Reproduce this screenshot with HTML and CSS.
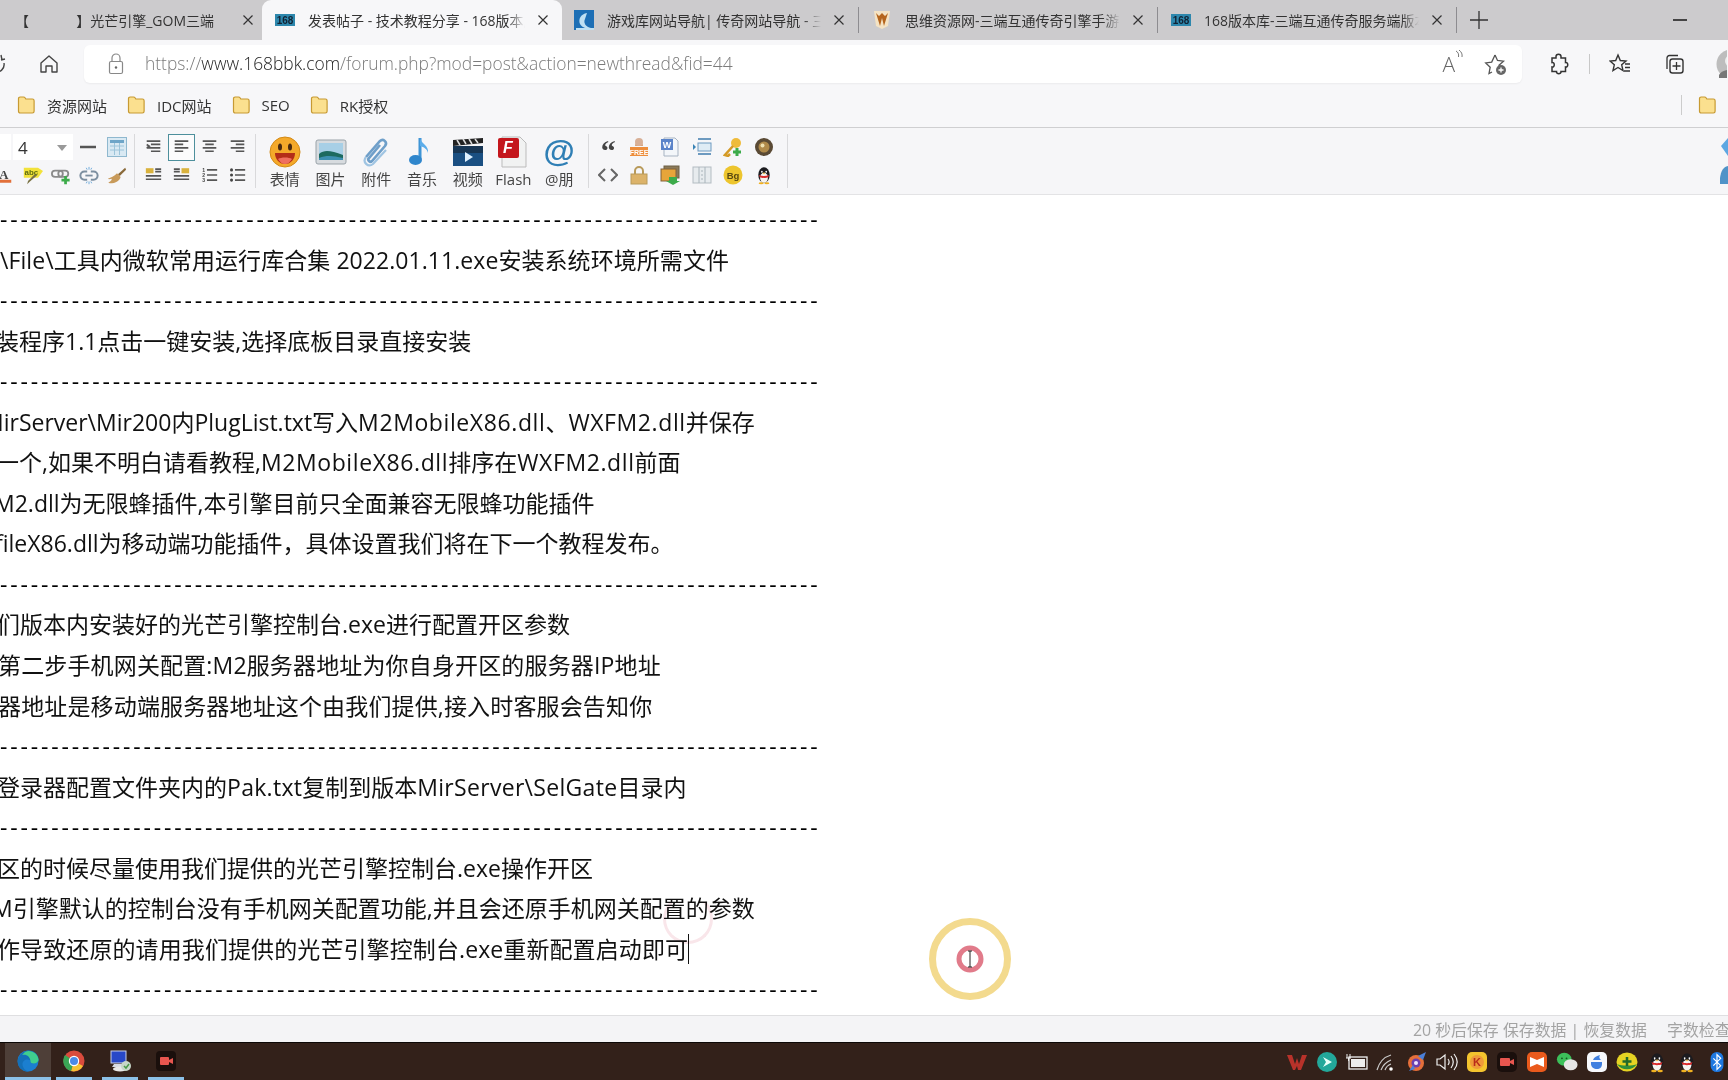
FILE: index.html
```html
<!DOCTYPE html>
<html lang="zh-CN">
<head>
<meta charset="utf-8">
<title>发表帖子 - 技术教程分享 - 168版本库</title>
<link rel="stylesheet" href="styles.css">
</head>
<body>
<svg class="defs" width="0" height="0" aria-hidden="true">
  <symbol id="folder" viewBox="0 0 20 20">
    <path d="M2.500 5V3.600C2.500 2.700 3.200 2 4.100 2h3.400c.8 0 1.300.4 1.700 1l.6 1h6.600c1 0 1.700.7 1.700 1.700v10.600c0 1-.7 1.700-1.700 1.700H4.200c-1 0-1.700-.7-1.700-1.700z" fill="#fbe08f" stroke="#c79a33" stroke-width="1.200"/>
  </symbol>
  <symbol id="logo168" viewBox="0 0 20 12">
    <rect width="20" height="12" fill="#2d87ad"/>
    <text x="10" y="9.500" font-size="10" font-weight="700" text-anchor="middle" fill="#123" font-family="Liberation Sans">168</text>
  </symbol>
  <symbol id="close" viewBox="0 0 12 12">
    <path d="M1.500 1.500l9 9M10.500 1.500l-9 9" stroke="#333" stroke-width="1.200" fill="none"/>
  </symbol>
  <symbol id="al-left" viewBox="0 0 20 18"><path d="M2 2h16M2 6h10M2 10h16M2 14h10" stroke="#555" stroke-width="2" fill="none"/></symbol>
  <symbol id="al-center" viewBox="0 0 20 18"><path d="M2 2h16M5 6h10M2 10h16M5 14h10" stroke="#555" stroke-width="2" fill="none"/></symbol>
  <symbol id="al-right" viewBox="0 0 20 18"><path d="M2 2h16M8 6h10M2 10h16M8 14h10" stroke="#555" stroke-width="2" fill="none"/></symbol>
  <symbol id="penguin" viewBox="0 0 24 28">
    <ellipse cx="12" cy="14" rx="8" ry="11" fill="#1b1b1f"/>
    <ellipse cx="12" cy="18" rx="5.500" ry="7" fill="#f5f3f0"/>
    <path d="M5 14c4 2 10 2 14 0l-1 3c-3 1.500-9 1.500-12 0z" fill="#d92b2b"/>
    <path d="M9 8a1 1.500 0 1 0 .1 0M15 8a1 1.500 0 1 0 .1 0" fill="#fff"/>
    <path d="M10 11h4l-2 2z" fill="#f0b020"/>
    <ellipse cx="8" cy="25.500" rx="3.500" ry="1.500" fill="#f0b020"/>
    <ellipse cx="16" cy="25.500" rx="3.500" ry="1.500" fill="#f0b020"/>
  </symbol>
</svg>

<div class="cursor-trail"></div>

<header class="tabstrip">
  <div class="tab first">
    <span class="tab-title first-title"><span>【</span><span>】光芒引擎_GOM三端</span></span>
    <svg class="tab-close"><use href="#close"/></svg>
  </div>
  <div class="tab active">
    <svg class="favicon logo"><use href="#logo168"/></svg>
    <span class="tab-title">发表帖子 - 技术教程分享 - 168版本库</span>
    <svg class="tab-close"><use href="#close"/></svg>
  </div>
  <div class="tab third">
    <svg class="favicon square" viewBox="0 0 20 20"><rect width="20" height="20" fill="#1d6fb5"/><path d="M13 3C7 4 4 9 6 14c1 2 3 3 5 4H2v2h18v-2h-3c-5-1-8-5-6-9 .5-2 1.500-4 2-6z" fill="#bfe0f2"/></svg>
    <span class="tab-title">游戏库网站导航| 传奇网站导航 - 三端互通</span>
    <svg class="tab-close"><use href="#close"/></svg>
  </div>
  <i class="tab-sep"></i>
  <div class="tab">
    <svg class="favicon square" viewBox="0 0 20 20"><path d="M2 1h16l-2 15-6 3-6-3z" fill="#f4e3c4"/><path d="M4 3l4 13 2-8 2 8 4-13-3 3-3-3-3 3z" fill="#b5651d"/></svg>
    <span class="tab-title">思维资源网-三端互通传奇引擎手游版本下载</span>
    <svg class="tab-close"><use href="#close"/></svg>
  </div>
  <i class="tab-sep"></i>
  <div class="tab">
    <svg class="favicon logo"><use href="#logo168"/></svg>
    <span class="tab-title">168版本库-三端互通传奇服务端版本下载</span>
    <svg class="tab-close"><use href="#close"/></svg>
  </div>
  <i class="tab-sep"></i>
  <svg class="new-tab" viewBox="0 0 18 18"><path d="M9 0v18M0 9h18" stroke="#333" stroke-width="1.300" fill="none"/></svg>
  <span class="tab-spacer"></span>
  <i class="minimize"></i>
</header>

<nav class="navbar">
  <svg class="nav-reload" viewBox="0 0 10 22"><path d="M1 2l1 5M1 7l4-1M-6 19c6 1 11-3 10-9" stroke="#444" stroke-width="1.400" fill="none"/></svg>
  <svg class="nav-home" viewBox="0 0 20 20"><path d="M2 9l8-7 8 7v9h-5v-6H7v6H2z" fill="none" stroke="#444" stroke-width="1.400" stroke-linejoin="round"/></svg>
  <div class="omnibox">
    <svg class="lock" viewBox="0 0 16 22"><path d="M4 9V5a4 4 0 0 1 8 0v4" fill="none" stroke="#888" stroke-width="1.200"/><rect x="1.500" y="8.500" width="13" height="12" rx="1.500" fill="none" stroke="#888" stroke-width="1.200"/><circle cx="8" cy="14.500" r="1.200" fill="#666"/></svg>
    <span class="url"><span class="url-dim">https://</span><span class="url-host">www.168bbk.com</span><span class="url-dim">/forum.php?mod=post&amp;action=newthread&amp;fid=44</span></span>
    <span class="omni-spacer"></span>
    <span class="read-aloud">A<svg viewBox="0 0 8 12"><path d="M1 1c2 1 3 3 2.500 6M4 0c2.500 2 3.500 4 3 7" fill="none" stroke="#777" stroke-width="1"/></svg></span>
    <svg class="omni-star" viewBox="0 0 24 24"><path d="M11 3l2.500 5.500 6 .7-4.500 4 1 3M8 20l-3 1.500 1.200-6.300-4.500-4.300 6-.8L11 3" fill="none" stroke="#555" stroke-width="1.300"/><circle cx="17" cy="18" r="5" fill="#666"/><path d="M17 15.500v5M14.500 18h5" stroke="#fff" stroke-width="1.300"/></svg>
  </div>
  <svg class="nav-ext" viewBox="0 0 22 22"><path d="M8 3.500c0-3 5-3 5 0V5h4.500v4.500c3-.5 3 5 0 4.500V18.500H13c.500 3-5 3-4.500 0H4V14c3 .5 3-5 0-4.500V5h4z" fill="none" stroke="#333" stroke-width="1.500"/></svg>
  <i class="nav-sep"></i>
  <svg class="nav-fav" viewBox="0 0 22 22"><path d="M9 2l2.300 5.500 5.700.5-4.300 3.800 1.300 5.700L9 14.500l-5 3 1.300-5.700L1 8l5.700-.5z" fill="none" stroke="#333" stroke-width="1.400"/><path d="M16 11h5M16 14.500h5M15 18h6" stroke="#333" stroke-width="1.300"/></svg>
  <svg class="nav-coll" viewBox="0 0 22 22"><path d="M4 16V5c0-1.500 1-2.500 2.500-2.500H15" fill="none" stroke="#333" stroke-width="1.300"/><rect x="7" y="6" width="13" height="14" rx="2.500" fill="none" stroke="#333" stroke-width="1.400"/><path d="M13.500 9v8M9.500 13h8" stroke="#333" stroke-width="1.300"/></svg>
  <svg class="nav-avatar" viewBox="0 0 11 30"><circle cx="15" cy="15" r="14.500" fill="#bdbdbd"/><circle cx="15" cy="12" r="6" fill="#eee"/><path d="M3 26c3-7 21-7 24 0v3H3z" fill="#777"/></svg>
</nav>

<nav class="bookmarks">
  <a class="bm"><svg class="bm-folder"><use href="#folder"/></svg>资源网站</a>
  <a class="bm"><svg class="bm-folder"><use href="#folder"/></svg>IDC网站</a>
  <a class="bm"><svg class="bm-folder"><use href="#folder"/></svg>SEO</a>
  <a class="bm"><svg class="bm-folder"><use href="#folder"/></svg>RK授权</a>
  <span class="bm-spacer"></span>
  <i class="bm-sep"></i>
  <svg class="bm-folder"><use href="#folder"/></svg>
</nav>

<section class="editor-bar">
  <div class="eb-group eb-font">
    <div class="eb-selects">
      <span class="eb-select stub"></span>
      <span class="eb-select size">4<i class="caret"></i></span>
      <svg class="ic20" viewBox="0 0 20 20"><path d="M2 10h16" stroke="#555" stroke-width="2.500"/></svg>
      <svg class="ic20 table-ic" viewBox="0 0 20 20"><rect x=".5" y=".5" width="19" height="19" fill="#d9e9f3" stroke="#8fb8cf"/><rect x="3" y="3" width="14" height="3" fill="#6ea5c8"/><path d="M3 9h14M3 13h14M7.500 6v12M12.500 6v12" stroke="#9cc4da" fill="none"/></svg>
    </div>
    <div class="eb-tools">
      <svg class="ic20 a-ic" viewBox="0 0 20 20"><text x="5" y="14" font-size="17" font-weight="700" fill="#444" text-anchor="middle" font-family="Liberation Serif">A</text><rect x="-6" y="15" width="21" height="4" fill="#e2703a"/></svg>
      <svg class="ic20 abc-ic" viewBox="0 0 24 20"><path d="M1 0h17l6 4-6 8H1z" fill="#f2e23b"/><text x="10" y="8.500" font-size="9.500" font-weight="700" fill="#5b6a10" text-anchor="middle" font-family="Liberation Sans">abc</text><path d="M17 9l-9 8-3 3 1-4 8-8z" fill="#7a7345"/></svg>
      <svg class="ic20" viewBox="0 0 22 20"><rect x="1" y="4" width="12" height="7" rx="3.500" fill="none" stroke="#8a8a8a" stroke-width="2"/><rect x="8" y="4" width="11" height="7" rx="3.500" fill="none" stroke="#8a8a8a" stroke-width="2"/><path d="M16 10v9M11.500 14.500h9" stroke="#3cab4a" stroke-width="3"/></svg>
      <svg class="ic20" viewBox="0 0 22 20"><path d="M9 5H6a4.500 4.500 0 0 0 0 9h3M13 5h3a4.500 4.500 0 0 1 0 9h-3" fill="none" stroke="#7d8fa0" stroke-width="2.200"/><path d="M7 9.500h8" stroke="#7d8fa0" stroke-width="2"/><path d="M11 0v3M11 16v3M14 1l-1 2M8 1l1 2M14 18l-1-2M8 18l1-2" stroke="#67a6d8" stroke-width="1"/></svg>
      <svg class="ic20" viewBox="0 0 22 20"><path d="M20 1L12 8l2 2 7-7z" fill="#8a6a3a"/><path d="M11 7l4 4c-1 4-5 7-12 7-1 0-2-.5-1-1 2-1 4-3 3-4-1 0-3 1-4 0 3-1 7-3 10-6z" fill="#c89a5a"/></svg>
    </div>
  </div>
  <i class="eb-sep"></i>
  <div class="eb-grid4">
    <svg class="ic-al" viewBox="0 0 20 18"><path d="M2 2h16M7 6h11M2 10h16M7 14h11M2 6l3 2-3 2" stroke="#555" stroke-width="2" fill="none"/></svg>
    <span class="al-active"><svg class="ic-al" viewBox="0 0 20 18"><use href="#al-left"/></svg></span>
    <svg class="ic-al" viewBox="0 0 20 18"><use href="#al-center"/></svg>
    <svg class="ic-al" viewBox="0 0 20 18"><use href="#al-right"/></svg>
    <svg class="ic-al" viewBox="0 0 20 18"><rect x="1" y="1" width="9" height="6" fill="#d9b23d"/><path d="M12 2h7M12 5h7M1 10h18M1 14h18" stroke="#555" stroke-width="2" fill="none"/></svg>
    <svg class="ic-al" viewBox="0 0 20 18"><rect x="10" y="1" width="9" height="6" fill="#d9b23d"/><path d="M1 2h7M1 5h7M1 10h18M1 14h18" stroke="#555" stroke-width="2" fill="none"/></svg>
    <svg class="ic-al" viewBox="0 0 20 18"><path d="M7 3h12M7 9h12M7 15h12" stroke="#555" stroke-width="2" fill="none"/><text x="3" y="5.500" font-size="6" font-weight="700" fill="#444" text-anchor="middle" font-family="Liberation Sans">1</text><text x="3" y="11.500" font-size="6" font-weight="700" fill="#444" text-anchor="middle" font-family="Liberation Sans">2</text><text x="3" y="17.500" font-size="6" font-weight="700" fill="#444" text-anchor="middle" font-family="Liberation Sans">3</text></svg>
    <svg class="ic-al" viewBox="0 0 20 18"><path d="M7 3h12M7 9h12M7 15h12" stroke="#555" stroke-width="2" fill="none"/><circle cx="3" cy="3" r="1.800" fill="#444"/><circle cx="3" cy="9" r="1.800" fill="#444"/><circle cx="3" cy="15" r="1.800" fill="#444"/></svg>
  </div>
  <i class="eb-sep"></i>
  <div class="eb-big">
    <figure class="big"><svg viewBox="0 0 32 32"><circle cx="16" cy="16" r="15" fill="#f4a92a" stroke="#d38a17"/><ellipse cx="11" cy="11" rx="2" ry="3.500" fill="#4a2a10"/><ellipse cx="21" cy="11" rx="2" ry="3.500" fill="#4a2a10"/><path d="M6 17h20c0 6-4 11-10 11S6 23 6 17z" fill="#b32d18"/><path d="M9 23c3-2 11-2 14 0-2 3-4 5-7 5s-5-2-7-5z" fill="#ef6f5f"/></svg><figcaption>表情</figcaption></figure>
    <figure class="big"><svg viewBox="0 0 32 32"><rect x="1" y="4" width="30" height="24" rx="2" fill="#d7dbdf" stroke="#9aa3a9"/><rect x="4" y="7" width="24" height="17" fill="#a7cfe6"/><path d="M4 18c6-5 12-3 24 1v5H4z" fill="#1d6a5f"/><path d="M4 22c8-3 14-2 24 0v2H4z" fill="#3d8fb0"/></svg><figcaption>图片</figcaption></figure>
    <figure class="big"><svg viewBox="0 0 32 32"><path d="M6 21L20 5c3-3 8 1 5 5L12 25c-2 2-5-1-3-3l11-13" fill="none" stroke="#6f9fc9" stroke-width="2.600"/><path d="M6 21c-4 5 2 11 7 7L26 14" fill="none" stroke="#9fc4e2" stroke-width="2.200"/></svg><figcaption>附件</figcaption></figure>
    <figure class="big"><svg viewBox="0 0 32 32"><path d="M14 2v21" stroke="#3f95d6" stroke-width="3"/><path d="M14 2c1 6 9 7 8 15-1-4-4-6-8-7z" fill="#5cadea"/><ellipse cx="9.500" cy="24" rx="6.500" ry="5" fill="#2f86cc"/></svg><figcaption>音乐</figcaption></figure>
    <figure class="big"><svg viewBox="0 0 32 32"><rect x="1" y="10" width="30" height="20" fill="#1a4f82"/><path d="M1 10h30v7H1z" fill="#173553"/><path d="M1 4l30-2v5l-30 3z" fill="#222"/><path d="M5 4l3 5M11 3l3 5M17 3l3 5M23 3l3 4" stroke="#ddd" stroke-width="1.500"/><path d="M13 16l8 5-8 5z" fill="#dff1ff"/></svg><figcaption>视频</figcaption></figure>
    <figure class="big"><svg viewBox="0 0 32 32"><path d="M5 1h18l6 6v24H5z" fill="#f1f2f2" stroke="#bbb"/><rect x="1" y="2" width="21" height="20" rx="2" fill="#c4161c"/><text x="11" y="17" font-size="16" font-weight="700" font-style="italic" fill="#fff" text-anchor="middle" font-family="Liberation Sans">F</text></svg><figcaption>Flash</figcaption></figure>
    <figure class="big"><svg viewBox="0 0 32 32"><text x="16" y="26" font-size="32" font-weight="700" fill="#2f7fb5" text-anchor="middle" font-family="Liberation Sans">@</text></svg><figcaption>@朋</figcaption></figure>
  </div>
  <i class="eb-sep"></i>
  <div class="eb-grid6">
    <span class="quote">“</span>
    <svg class="ic-sm" viewBox="0 0 20 20"><path d="M6 9a4 4 0 0 1 8 0" fill="#d6a27a"/><circle cx="10" cy="5" r="4" fill="#d8b097"/><rect x="1" y="10" width="18" height="9" fill="#ed8d3b"/><text x="10" y="17.500" font-size="7" font-weight="700" fill="#fff" text-anchor="middle" font-family="Liberation Sans">FREE</text></svg>
    <svg class="ic-sm" viewBox="0 0 20 20"><path d="M4 1h11l3 3v15H4z" fill="#f3f6fa" stroke="#a7b3c2"/><rect x="1" y="2" width="12" height="11" fill="#5a83c9"/><text x="7" y="11" font-size="9" font-weight="700" fill="#fff" text-anchor="middle" font-family="Liberation Sans">W</text></svg>
    <svg class="ic-sm" viewBox="0 0 20 20"><path d="M6 2h13M6 17h13" stroke="#6d9ac0" stroke-width="2"/><rect x="6" y="6" width="13" height="8" fill="#dfecf5" stroke="#6d9ac0"/><path d="M1 7l3 3-3 3z" fill="#3a83b5"/></svg>
    <svg class="ic-sm" viewBox="0 0 20 20"><circle cx="13" cy="6" r="5" fill="#efbb3a"/><path d="M10 9L2 18l3 1 2-2" fill="none" stroke="#d49a26" stroke-width="2.500"/><path d="M14 11v8M10 15h8" stroke="#3cab4a" stroke-width="3"/></svg>
    <svg class="ic-sm" viewBox="0 0 20 20"><circle cx="10" cy="10" r="9" fill="#5a4a35"/><circle cx="10" cy="10" r="5.500" fill="#b08a4a"/><circle cx="8.500" cy="8.500" r="2" fill="#efe0b0"/></svg>
    <svg class="ic-sm" viewBox="0 0 20 20"><path d="M7 4l-6 6 6 6M13 4l6 6-6 6" fill="none" stroke="#666" stroke-width="2"/></svg>
    <svg class="ic-sm" viewBox="0 0 20 20"><path d="M6 9V6a4 4 0 0 1 8 0v3" fill="none" stroke="#b89a5a" stroke-width="2"/><rect x="2" y="9" width="16" height="10" fill="#dcb36a" stroke="#b89a5a"/></svg>
    <svg class="ic-sm" viewBox="0 0 20 20"><rect x="4" y="1" width="15" height="12" fill="#8b7a5a" stroke="#6d5f45"/><rect x="1" y="4" width="15" height="12" fill="#e7a53a" stroke="#80603a"/><path d="M9 12h8v4h3l-7 4-7-4h3z" fill="#3cab4a"/></svg>
    <svg class="ic-sm" viewBox="0 0 20 20"><rect x="1" y="2" width="18" height="16" fill="#e7ebee" stroke="#b3bcc2"/><path d="M7 2v16M13 2v16M9 6h2M9 10h2M9 14h2" stroke="#a9b4bb"/></svg>
    <svg class="ic-sm" viewBox="0 0 20 20"><circle cx="10" cy="10" r="9.500" fill="#edc52e"/><text x="10" y="13.500" font-size="9.500" font-weight="700" fill="#5a4a10" text-anchor="middle" font-family="Liberation Sans">Bg</text></svg>
    <svg class="ic-sm" viewBox="0 0 24 28"><use href="#penguin"/></svg>
  </div>
  <i class="eb-sep"></i>
  <span class="eb-spacer"></span>
  <div class="eb-edge">
    <svg viewBox="0 0 8 18"><path d="M8 0L1 8l7 10z" fill="#5da7e2"/></svg>
    <svg viewBox="0 0 8 18"><path d="M8 0C3 1 1 5 0 12v6h8z" fill="#5093c8"/></svg>
  </div>
</section>

<main class="editor">
  <p class="rule">--------------------------------------------------------------------------------</p>
  <p class="ln l-a">\File\工具内微软常用运行库合集 2022.01.11.exe安装系统环境所需文件</p>
  <p class="rule">--------------------------------------------------------------------------------</p>
  <p class="ln l-b">装程序1.1点击一键安装,选择底板目录直接安装</p>
  <p class="rule">--------------------------------------------------------------------------------</p>
  <p class="ln l-c">MirServer\Mir200内PlugList.txt写入<span class="lat">M2MobileX86.dll</span>、<span class="lat">WXFM2.dll</span>并保存</p>
  <p class="ln l-d">一个,如果不明白请看教程,<span class="lat">M2MobileX86.dll</span>排序在<span class="lat">WXFM2.dll</span>前面</p>
  <p class="ln l-e">M2.dll为无限蜂插件,本引擎目前只全面兼容无限蜂功能插件</p>
  <p class="ln l-f">fileX86.dll为移动端功能插件，具体设置我们将在下一个教程发布。</p>
  <p class="rule">--------------------------------------------------------------------------------</p>
  <p class="ln l-g">们版本内安装好的光芒引擎控制台.exe进行配置开区参数</p>
  <p class="ln l-h">第二步手机网关配置:M2服务器地址为你自身开区的服务器IP地址</p>
  <p class="ln l-h">器地址是移动端服务器地址这个由我们提供,接入时客服会告知你</p>
  <p class="rule">--------------------------------------------------------------------------------</p>
  <p class="ln l-g">登录器配置文件夹内的<span class="lat-s">Pak.txt</span>复制到版本<span class="lat-s">MirServer\SelGate</span>目录内</p>
  <p class="rule">--------------------------------------------------------------------------------</p>
  <p class="ln l-g">区的时候尽量使用我们提供的光芒引擎控制台.exe操作开区</p>
  <p class="ln l-m">M引擎默认的控制台没有手机网关配置功能,并且会还原手机网关配置的参数</p>
  <p class="ln l-i">作导致还原的请用我们提供的光芒引擎控制台.exe重新配置启动即可<i class="text-caret"></i></p>
  <p class="rule">--------------------------------------------------------------------------------</p>
</main>

<footer class="statusbar">
  <span>20 秒后保存 保存数据 | 恢复数据</span>
  <span class="wordcount">字数检查</span>
</footer>

<footer class="taskbar">
  <span class="task running active"><svg viewBox="0 0 22 22"><circle cx="11" cy="11" r="10.500" fill="#1b7fd0"/><path d="M1 9C3 3 8 .5 12 .5c5 0 9.500 4 9.500 9 0 2.500-2.500 4-5 4-2 0-4-1-3-3-3-2-8-1-8 4 0 3 3 7 7 7C7 22.500-1 18 1 9z" fill="#1470b8"/><path d="M8 2c6-3 13 2 13.500 7.500 0 2.500-2.500 4-5 4-2 0-3.500-1-3-2.500C13 7 10 4 5 5z" fill="#3fcf8e"/></svg></span>
  <span class="task running"><svg viewBox="0 0 22 22"><circle cx="11" cy="11" r="10.500" fill="#d94b3d"/><path d="M11 11L20 16A10.500 10.500 0 0 1 8 21z" fill="#f6c233"/><path d="M11 11L8 21A10.500 10.500 0 0 1 2 5z" fill="#3aa655"/><circle cx="11" cy="11" r="5.200" fill="#fff"/><circle cx="11" cy="11" r="4" fill="#4a8ae8"/></svg></span>
  <span class="task running"><svg viewBox="0 0 22 22"><rect x="2" y="1" width="15" height="12" fill="#2848c8" stroke="#c8d0e8"/><path d="M5 14h10l2 3H3z" fill="#d8dce4"/><ellipse cx="11" cy="19" rx="7" ry="2.500" fill="#e8e8e8"/><circle cx="17" cy="16" r="5" fill="#c8d6c8"/><path d="M15 16l2 2 3-4" stroke="#4a9a4a" fill="none" stroke-width="1.500"/></svg></span>
  <span class="task running"><svg viewBox="0 0 22 22"><rect x="1" y="1" width="20" height="20" rx="4" fill="#1a0f0c"/><rect x="5" y="7" width="9" height="8" rx="1" fill="#e8564f"/><path d="M14 10l4-2v6l-4-2z" fill="#e8564f"/></svg></span>
  <span class="tray-spacer"></span>
  <div class="tray">
    <svg viewBox="0 0 22 20"><path d="M1 3h5l3 9 2-6 2 6 3-9h5l-6 15h-3l-1-4-2 4H7z" fill="#b8322a"/></svg>
    <svg viewBox="0 0 22 22"><circle cx="11" cy="11" r="10" fill="#23a89a"/><path d="M7 6l9 5-9 5 3-5z" fill="#e8fff8"/></svg>
    <svg viewBox="0 0 22 20"><rect x="3" y="5" width="18" height="12" fill="none" stroke="#eee" stroke-width="1.300"/><rect x="5" y="7" width="14" height="8" fill="#eee"/><path d="M1 2v4M4 2v4M0 6h5M2.500 6v3" stroke="#eee"/></svg>
    <svg viewBox="0 0 22 20"><path d="M1 18C3 11 8 5 15 3M5 18c2-5 5-8 10-10M9 18c1-3 3-5 6-6" fill="none" stroke="#ccc" stroke-width="1.200"/><circle cx="15" cy="17" r="1.800" fill="#fff"/></svg>
    <svg viewBox="0 0 22 22"><circle cx="10" cy="12" r="8" fill="#e66f3a"/><circle cx="10" cy="12" r="4.500" fill="#6a3fb0"/><circle cx="10" cy="12" r="2" fill="#efe4ff"/><path d="M12 5l8-4-3 8zM3 20l4-6 2 4z" fill="#4a7fd8"/></svg>
    <svg viewBox="0 0 22 20"><path d="M1 7h3l5-4v14l-5-4H1z" fill="none" stroke="#eee" stroke-width="1.200"/><path d="M12 7c1.500 2 1.500 4 0 6M15 4c3 4 3 8 0 12M18 2c4 5 4 11 0 16" fill="none" stroke="#eee" stroke-width="1.200"/></svg>
    <svg viewBox="0 0 22 22"><rect x="1" y="1" width="20" height="20" rx="5" fill="#f4c42e"/><circle cx="11" cy="11" r="7" fill="#ef9a3a"/><text x="11" y="15" font-size="11" font-weight="700" fill="#b82a1a" text-anchor="middle" font-family="Liberation Sans">K</text></svg>
    <svg viewBox="0 0 22 22"><rect x="1" y="1" width="20" height="20" rx="5" fill="#1a0f0c"/><rect x="4" y="7" width="10" height="8" rx="1" fill="#e8564f"/><path d="M14 10l4-2v6l-4-2z" fill="#e8564f"/></svg>
    <svg viewBox="0 0 22 22"><rect x="1" y="1" width="20" height="20" rx="5" fill="#ea5a1c"/><path d="M4 6l7 3 7-3v10l-7-3-7 3z" fill="#fff"/></svg>
    <svg viewBox="0 0 24 22"><ellipse cx="9" cy="8" rx="8" ry="7" fill="#3cc05a"/><ellipse cx="16" cy="14" rx="7.500" ry="6" fill="#e6e6e6"/><circle cx="6.500" cy="7" r="1" fill="#14541f"/><circle cx="11.500" cy="7" r="1" fill="#14541f"/></svg>
    <svg viewBox="0 0 22 22"><rect x="1" y="1" width="20" height="20" rx="5" fill="#f6f8fc"/><path d="M5 11h11v2c0 3-2 5-5 5s-6-2-6-5zM7 9c1-3 4-4 7-5-1 2-1 3 1 5z" fill="#3f7fe0"/></svg>
    <svg viewBox="0 0 22 22"><ellipse cx="11" cy="11" rx="10.500" ry="9.500" fill="#e6d323"/><path d="M1 13c4 7 16 7 20 0-4 2-16 2-20 0z" fill="#2f8f3a"/><path d="M11 6v9M6.500 10.500h9" stroke="#236a2a" stroke-width="2.500"/></svg>
    <svg viewBox="0 0 24 28"><use href="#penguin"/></svg>
    <svg viewBox="0 0 24 28"><use href="#penguin"/></svg>
    <svg viewBox="0 0 16 24"><rect x="1" y="1" width="14" height="22" rx="7" fill="#1e78e0"/><path d="M4 8l8 8-4 4V4l4 4-8 8" fill="none" stroke="#fff" stroke-width="1.300"/></svg>
  </div>
</footer>

<div class="cursor-fx">
  <svg viewBox="0 0 90 90"><circle cx="45" cy="45" r="37.500" fill="none" stroke="#f3da8e" stroke-width="7"/><circle cx="45" cy="45" r="11" fill="none" stroke="#e17b8a" stroke-width="5"/><path d="M43 37h4M45 37v16M43 53h4" stroke="#222" stroke-width="1" fill="none"/></svg>
</div>
</body>
</html>
```

FILE: styles.css
```css
* { box-sizing: border-box; }
html, body { margin: 0; height: 100%; }
body {
  width: 1728px; height: 1080px; overflow: hidden; position: relative;
  display: flex; flex-direction: column; background: #fff;
  font-family: "Open Sans", "Noto Sans CJK SC", sans-serif; color: #222;
}
.defs { position: absolute; }
svg { display: block; flex: none; }

/* tabs */
.tabstrip { height: 40px; flex: none; display: flex; align-items: center; background: #cccbcd; }
.tab { width: 298px; height: 40px; flex: none; display: flex; align-items: center; padding: 0 13px 0 13px; font-size: 14px; color: #333; }
.tab.first { width: 262px; padding-left: 15px; padding-right: 8px; }
.tab.active { width: 300px; background: #f7f7f9; border-radius: 9px 9px 0 0; }
.tab.third { width: 296px; padding-left: 12px; }
.favicon { width: 20px; margin-right: 13px; }
.favicon.logo { height: 12px; }
.favicon.square { height: 20px; }
.tab-title { flex: 1; min-width: 0; white-space: nowrap; overflow: hidden; -webkit-mask-image: linear-gradient(to right, #000 92%, transparent); mask-image: linear-gradient(to right, #000 92%, transparent); }
.first-title { display: flex; justify-content: space-between; padding-right: 16px; -webkit-mask-image: none; mask-image: none; }
.tab-close { width: 12px; height: 12px; margin-left: 12px; }
.tab-sep { width: 1px; height: 26px; background: #8d8c90; flex: none; }
.new-tab { width: 18px; height: 18px; margin-left: 13px; }
.tab-spacer { flex: 1; }
.minimize { width: 14px; height: 1.500px; background: #444; margin-right: 41px; }

/* navbar */
.navbar { height: 48px; flex: none; display: flex; align-items: center; background: #f7f7f9; }
.nav-reload { width: 10px; height: 22px; }
.nav-home { width: 20px; height: 20px; margin-left: 29px; }
.omnibox { width: 1438px; height: 38px; margin-left: 25px; background: #fff; border-radius: 6px; display: flex; align-items: center; padding: 0 14px 0 24px; box-shadow: 0 1px 2px rgba(0,0,0,.05); }
.lock { width: 16px; height: 22px; }
.url { margin-left: 21px; margin-bottom: 2px; font-size: 17.400px; font-weight: 300; white-space: nowrap; }
.url-dim { color: #7b7b7b; }
.url-host { color: #222; }
.omni-spacer { flex: 1; }
.read-aloud { display: flex; align-items: flex-start; font-size: 21px; font-weight: 300; color: #666; margin-right: 21px; }
.read-aloud svg { width: 8px; height: 12px; }
.omni-star { width: 24px; height: 24px; }
.nav-ext { width: 22px; height: 22px; margin-left: 26px; }
.nav-sep { width: 1px; height: 20px; background: #c8c8c8; margin-left: 19px; }
.nav-fav { width: 22px; height: 22px; margin-left: 19px; }
.nav-coll { width: 22px; height: 22px; margin-left: 32px; }
.nav-avatar { width: 11px; height: 30px; margin-left: 31px; }

/* bookmarks */
.bookmarks { height: 40px; flex: none; display: flex; align-items: center; background: #f7f7f9; border-bottom: 1px solid #cfcfd1; padding: 0 0 5px 16px; font-size: 15px; color: #333; }
.bm { display: flex; align-items: center; margin-right: 19px; }
.bm-folder { width: 20px; height: 20px; margin-right: 11px; }
.bm-spacer { flex: 1; }
.bm-sep { width: 1px; height: 20px; background: #ccc; margin-right: 15px; }

/* editor toolbar */
.editor-bar { height: 67px; flex: none; display: flex; align-items: center; background: #f6f6f8; border-bottom: 1px solid #e3e3e5; }
.eb-group { display: flex; flex-direction: column; gap: 4px; }
.eb-selects { display: flex; align-items: center; height: 26px; }
.eb-select { height: 26px; background: #fff; display: flex; align-items: center; font-size: 17px; color: #333; }
.eb-select.stub { width: 11px; margin-right: 2px; }
.eb-select.size { width: 60px; padding-left: 5px; position: relative; }
.caret { position: absolute; right: 6px; top: 11px; border: 5px solid transparent; border-top: 6px solid #999; border-bottom: 0; }
.ic20 { width: 20px; height: 20px; }
.eb-selects .ic20:first-of-type { margin-left: 5px; }
.table-ic { margin-left: 9px; }
.eb-tools { display: flex; gap: 8px; height: 24px; align-items: center; }
.a-ic { width: 15px; overflow: hidden; }
.eb-sep { width: 1px; height: 54px; background: #d9d9db; flex: none; }
.eb-font { width: 134px; }
.eb-grid4 { display: grid; grid-template-columns: repeat(4, 28px); grid-auto-rows: 28px; place-items: center; width: 120px; justify-content: center; }
.ic-al { width: 17px; height: 16px; }
.al-active { width: 27px; height: 27px; border: 1px solid #4d8f9c; display: flex; align-items: center; justify-content: center; background: #fbfbfc; }
.eb-big { display: flex; width: 332px; justify-content: space-around; padding: 2px 6px 0; }
.big { margin: 0; width: 46px; display: flex; flex-direction: column; align-items: center; }
.big svg { width: 32px; height: 32px; }
.big figcaption { font-size: 15px; line-height: 18px; margin-top: 2px; color: #444; white-space: nowrap; }
.eb-grid6 { display: grid; grid-template-columns: repeat(6, 31.100px); grid-auto-rows: 28px; place-items: center; width: 198px; padding-right: 4px; justify-content: center; }
.ic-sm { width: 20px; height: 20px; }
.quote { font-family: "Liberation Serif", serif; font-size: 30px; font-weight: 700; line-height: 28px; height: 20px; color: #444; }
.eb-spacer { flex: 1; }
.eb-edge { display: flex; flex-direction: column; gap: 10px; width: 8px; align-items: flex-end; }
.eb-edge svg { width: 8px; height: 18px; }

/* editor */
.editor { flex: 1; min-height: 0; overflow: hidden; background: #fff; padding-top: 4px; position: relative; z-index: 1; }
.rule, .ln { margin: 0; height: 40.550px; line-height: 40.550px; font-size: 23px; color: #111; white-space: nowrap; font-family: "Open Sans", "Noto Sans CJK SC", sans-serif; }
.rule { letter-spacing: 2.855px; overflow: hidden; width: 818px; color: #000; }
.lat { letter-spacing: .6px; }
.lat-s { letter-spacing: .3px; }
.l-a { text-indent: 0; letter-spacing: .06px; }
.l-b { text-indent: -4px; }
.l-c { text-indent: -17px; }
.l-d { text-indent: -4px; }
.l-e { text-indent: -6px; }
.l-f { text-indent: -5px; }
.l-g { text-indent: -3px; }
.l-h { text-indent: -2px; letter-spacing: .15px; }
.l-i { text-indent: -3px; letter-spacing: .1px; }
.l-m { text-indent: -8px; }
.text-caret { display: inline-block; width: 1px; height: 30px; background: #111; vertical-align: -6px; }

/* status + taskbar */
.statusbar { height: 27px; flex: none; display: flex; justify-content: flex-end; align-items: center; gap: 20px; background: #f4f4f6; border-top: 1px solid #dfdfe1; font-size: 15.900px; color: #a3a3a3; white-space: nowrap; overflow: hidden; }
.wordcount { width: 61px; flex: none; overflow: hidden; }
.taskbar { height: 38px; flex: none; display: flex; align-items: center; background: #33211a; border-top: 1px solid #0c0806; padding-left: 5px; }
.task { width: 46px; height: 37px; display: flex; align-items: center; justify-content: center; position: relative; padding-bottom: 2px; }
.task svg { width: 22px; height: 22px; }
.task.running::after { content: ""; position: absolute; left: 5px; right: 5px; bottom: 0; height: 3px; background: #8cc1e8; }
.task.active { background: #4e3f38; }
.task.active::after { left: 0; right: 0; }
.tray-spacer { flex: 1; }
.tray { display: flex; align-items: center; gap: 8px; margin-right: 0; }
.tray svg { width: 22px; height: 22px; }

/* presenter cursor overlay */
.cursor-trail { position: absolute; left: 663px; top: 894px; width: 50px; height: 50px; border: 3px solid #f9e6ea; border-top-color: transparent; border-radius: 50%; z-index: 2; mix-blend-mode: multiply; }
.cursor-fx { position: absolute; left: 925px; top: 914px; width: 90px; height: 90px; z-index: 3; }
```
